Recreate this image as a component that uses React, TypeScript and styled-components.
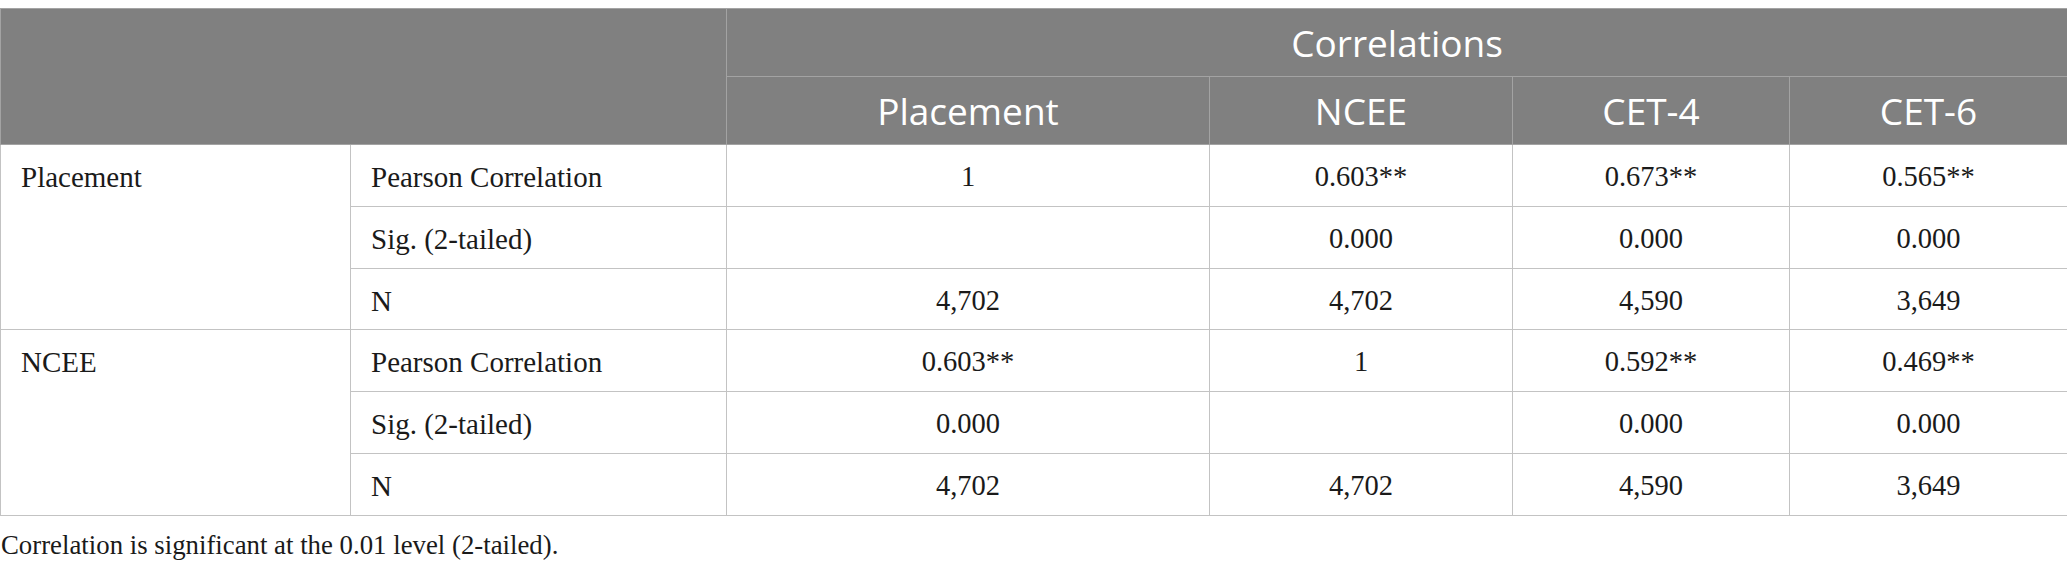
import React from "react";
import styled, { createGlobalStyle } from "styled-components";

const GlobalStyle = createGlobalStyle`
  html, body {
    margin: 0;
    padding: 0;
    background: #ffffff;
  }
`;

const Page = styled.div`
  padding-top: 8px;
  width: 2067px;
`;

const Table = styled.table`
  width: 2067px;
  border-collapse: collapse;
  table-layout: fixed;
  border: 1px solid #b4b4b4;
`;

const HeadRow = styled.tr`
  height: 68px;
`;

const HeadCell = styled.th`
  background: #808080;
  color: #ffffff;
  font-family: "Open Sans", "DejaVu Sans", sans-serif;
  font-weight: 400;
  font-size: 37px;
  text-align: center;
  vertical-align: middle;
  padding: 0 10px;
  border: 1px solid #a3a3a3;
  white-space: nowrap;
`;

const BodyRow = styled.tr`
  height: 61.8px;
`;

const Cell = styled.td<{ $center?: boolean }>`
  font-family: "Liberation Serif", "Times New Roman", serif;
  font-size: ${(p) => (p.$center ? "28.5px" : "29px")};
  line-height: 34px;
  color: #1a1a1a;
  text-align: ${(p) => (p.$center ? "center" : "left")};
  vertical-align: top;
  padding: 15px 20px 0 20px;
  border: 1px solid #c3c3c3;
  white-space: nowrap;
`;

const Note = styled.p`
  margin: 12px 0 0 1px;
  font-family: "Liberation Serif", "Times New Roman", serif;
  font-size: 26.8px;
  line-height: 34px;
  color: #1a1a1a;
`;

type Block = {
  name: string;
  rows: { label: string; values: string[] }[];
};

const data: Block[] = [
  {
    name: "Placement",
    rows: [
      { label: "Pearson Correlation", values: ["1", "0.603**", "0.673**", "0.565**"] },
      { label: "Sig. (2-tailed)", values: ["", "0.000", "0.000", "0.000"] },
      { label: "N", values: ["4,702", "4,702", "4,590", "3,649"] },
    ],
  },
  {
    name: "NCEE",
    rows: [
      { label: "Pearson Correlation", values: ["0.603**", "1", "0.592**", "0.469**"] },
      { label: "Sig. (2-tailed)", values: ["0.000", "", "0.000", "0.000"] },
      { label: "N", values: ["4,702", "4,702", "4,590", "3,649"] },
    ],
  },
];

const widths = [350, 376, 483, 303, 277, 278];

export default function App() {
  return (
    <Page>
      <GlobalStyle />
      <Table>
        <colgroup>
          {widths.map((w, i) => (
            <col key={i} style={{ width: w }} />
          ))}
        </colgroup>
        <thead>
          <HeadRow>
            <HeadCell colSpan={2} rowSpan={2} />
            <HeadCell colSpan={4}>Correlations</HeadCell>
          </HeadRow>
          <HeadRow>
            <HeadCell>Placement</HeadCell>
            <HeadCell>NCEE</HeadCell>
            <HeadCell>CET-4</HeadCell>
            <HeadCell>CET-6</HeadCell>
          </HeadRow>
        </thead>
        <tbody>
          {data.map((block) =>
            block.rows.map((row, ri) => (
              <BodyRow key={block.name + ri}>
                {ri === 0 && <Cell rowSpan={block.rows.length}>{block.name}</Cell>}
                <Cell>{row.label}</Cell>
                {row.values.map((v, vi) => (
                  <Cell key={vi} $center>
                    {v}
                  </Cell>
                ))}
              </BodyRow>
            ))
          )}
        </tbody>
      </Table>
      <Note>Correlation is significant at the 0.01 level (2-tailed).</Note>
    </Page>
  );
}
